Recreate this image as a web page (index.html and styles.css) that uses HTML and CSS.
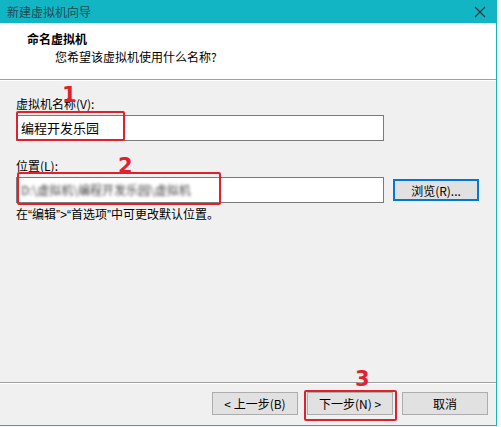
FILE: index.html
```html
<!DOCTYPE html>
<html lang="zh-CN">
  <head>
    <meta charset="UTF-8" />
    <title>新建虚拟机向导</title>
    <link rel="stylesheet" href="styles.css">
  </head>
  <body>
    <div class="window">
      <div class="titlebar">
        <span class="title">新建虚拟机向导</span>
        <svg class="close" width="12" height="12" viewBox="0 0 12 12">
          <path d="M1 1 L11 11 M11 1 L1 11" stroke="#1a3a40" stroke-width="1.2" fill="none" />
        </svg>
      </div>

      <div class="header">
        <div class="header-title">命名虚拟机</div>
        <div class="header-sub">您希望该虚拟机使用什么名称?</div>
      </div>

      <div class="body">
        <label class="label">虚拟机名称(V):</label>
        <div class="row">
          <div class="input">编程开发乐园</div>
        </div>

        <label class="label label-loc">位置(L):</label>
        <div class="row">
          <div class="input"><span class="blurred">D:\虚拟机\编程开发乐园\虚拟机</span></div>
          <button class="btn btn-browse">浏览(R)...</button>
        </div>
        <div class="hint">在“编辑”&gt;“首选项”中可更改默认位置。</div>
      </div>

      <div class="footer">
        <button class="btn">&lt; 上一步(B)</button>
        <button class="btn">下一步(N) &gt;</button>
        <button class="btn">取消</button>
      </div>

      <!-- red annotations -->
      <div class="mark box-1"></div>
      <div class="mark box-2"></div>
      <div class="mark box-3"></div>
      <span class="num num-1">1</span>
      <span class="num num-2">2</span>
      <span class="num num-3">3</span>
    </div>
  </body>
</html>
```

FILE: styles.css
```css
body {
  margin: 0;
  background-color: #f4f8f9;
  font-family: "Noto Sans CJK SC", "Noto Sans", sans-serif;
  font-size: 12px;
  color: #000;
}

.window {
  position: relative;
  width: 496px;
  height: 425px;
  background-color: #f0f0f0;
  border-right: 1px solid #1ab2c0;
  border-bottom: 1px solid #1ab2c0;
  display: flex;
  flex-direction: column;
}

.titlebar {
  height: 23px;
  background-color: #12b5c4;
  display: flex;
  align-items: center;
  justify-content: space-between;
  padding: 0 10px 0 7px;
}

.title {
  color: #1f4a50;
  font-size: 12px;
}

.header {
  height: 57px;
  background-color: #fff;
  border-bottom: 1px solid #a0a0a0;
  box-sizing: border-box;
  padding: 7px 0 0 27px;
}

.header-title {
  font-weight: bold;
  font-size: 12px;
  line-height: 18px;
}

.header-sub {
  padding-left: 28px;
  line-height: 18px;
}

.body {
  flex: 1;
  padding: 15px 0 0 16px;
  border-top: 1px solid #fff;
}

.label {
  display: block;
  line-height: 16px;
}

.label-loc {
  margin-top: 17px;
}

.row {
  display: flex;
  align-items: center;
  gap: 9px;
  margin-top: 3px;
}

.input {
  width: 362px;
  height: 24px;
  background-color: #fff;
  border: 1px solid #7a7a7a;
  line-height: 24px;
  padding-left: 4px;
  box-sizing: content-box;
  font-size: 13px;
}

.blurred {
  color: #444;
  filter: blur(1.4px);
  font-size: 12px;
}

.hint {
  margin-top: 4px;
  line-height: 16px;
  font-family: "Liberation Sans", "Noto Sans CJK SC", sans-serif;
}

.btn {
  height: 23px;
  width: 86px;
  background-color: #e1e1e1;
  border: 1px solid #adadad;
  font-family: inherit;
  font-size: 12px;
  color: #000;
  padding: 0;
}

.btn-browse {
  width: 86px;
  height: 22px;
  border: 2px solid #0078d7;
}

.footer {
  height: 40px;
  border-top: 1px solid #a0a0a0;
  box-shadow: inset 0 1px 0 #fff;
  display: flex;
  justify-content: flex-end;
  align-items: center;
  gap: 9px;
  padding-right: 8px;
  padding-bottom: 2px;
}

.close {
  display: block;
}

.mark {
  position: absolute;
  border: 2px solid #e0202c;
  border-radius: 2px;
}

.box-1 {
  left: 16px;
  top: 111px;
  width: 105px;
  height: 26px;
}

.box-2 {
  left: 17px;
  top: 172px;
  width: 200px;
  height: 29px;
}

.box-3 {
  left: 304px;
  top: 390px;
  width: 89px;
  height: 27px;
}

.num {
  position: absolute;
  color: #e0202c;
  font-family: "DejaVu Sans", sans-serif;
  font-weight: bold;
  font-size: 21px;
  line-height: 22px;
}

.num-1 {
  left: 62px;
  top: 84px;
}

.num-2 {
  left: 118px;
  top: 155px;
}

.num-3 {
  left: 355px;
  top: 368px;
}
```
